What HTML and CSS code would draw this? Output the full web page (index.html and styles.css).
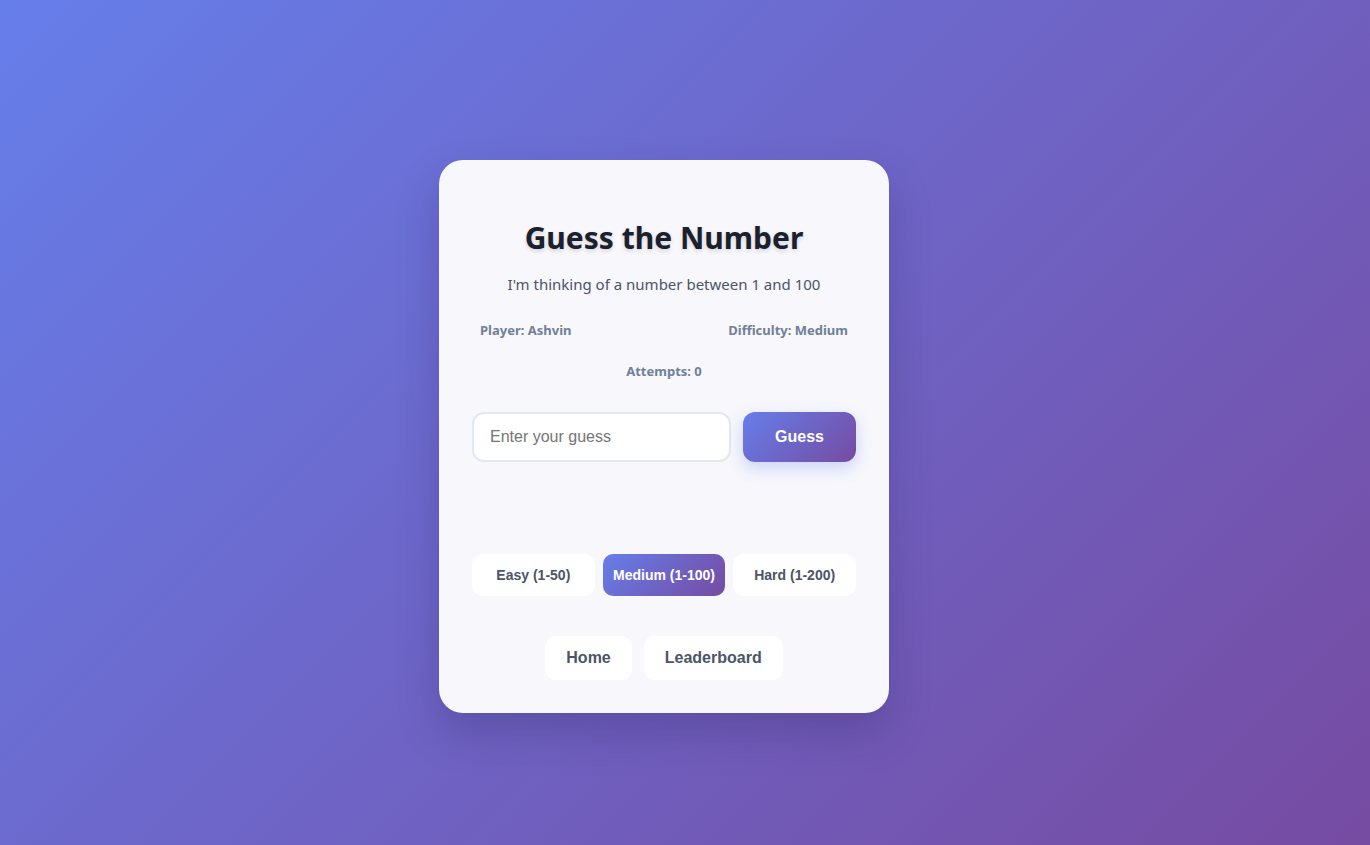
FILE: index.html
```html
<!DOCTYPE html>
<html lang="en">
<head>
<meta charset="utf-8">
<title>Guess the Number</title>
<link rel="stylesheet" href="styles.css">
</head>
<body>
<main class="page">
  <section class="card">
    <h1 class="title">Guess the Number</h1>
    <p class="subtitle">I'm thinking of a number between 1 and 100</p>
    <div class="stats">
      <span class="stat">Player: Ashvin</span>
      <span class="stat">Difficulty: Medium</span>
    </div>
    <div class="stats stats-center">
      <span class="stat">Attempts: 0</span>
    </div>
    <div class="guess-row">
      <input class="guess-input" type="text" placeholder="Enter your guess">
      <button class="guess-btn">Guess</button>
    </div>
    <div class="message"></div>
    <div class="levels">
      <button class="level">Easy (1-50)</button>
      <button class="level active">Medium (1-100)</button>
      <button class="level">Hard (1-200)</button>
    </div>
    <nav class="nav">
      <button class="nav-btn">Home</button>
      <button class="nav-btn">Leaderboard</button>
    </nav>
  </section>
</main>
</body>
</html>
```
FILE: styles.css
```css
* { box-sizing: border-box; }
html, body { margin: 0; height: 100%; }
body {
  background: linear-gradient(135deg, #667eea 0%, #764ba2 100%);
  font-family: "Noto Sans", "Open Sans", sans-serif;
}
.page {
  min-height: 100vh;
  display: flex;
  align-items: center;
  justify-content: center;
  padding: 28px 42px 0 0;
}
.card {
  width: 450px;
  background: #f7f7fc;
  border-radius: 24px;
  padding: 58px 33px 33px;
  box-shadow: 0 20px 40px rgba(40, 30, 90, 0.25);
  text-align: center;
}
.title {
  margin: 0;
  font-size: 30px;
  line-height: 40px;
  font-weight: 700;
  color: #1a202c;
  text-shadow: 0 2px 4px rgba(0, 0, 0, 0.15);
}
.subtitle {
  margin: 14px 0 0;
  font-size: 15px;
  line-height: 24px;
  color: #4a5568;
}
.stats {
  display: flex;
  justify-content: space-between;
  padding: 0 8px;
  margin-top: 24px;
}
.stats-center { justify-content: center; margin-top: 21px; }
.stat {
  font-size: 13px;
  line-height: 20px;
  font-weight: 700;
  color: #718096;
}
.guess-row {
  display: flex;
  gap: 12px;
  margin-top: 31px;
}
.guess-input {
  flex: 1;
  min-width: 0;
  height: 50px;
  border: 2px solid #e2e8f0;
  border-radius: 12px;
  background: #fff;
  padding: 0 16px;
  font-family: "Liberation Sans", Arial, sans-serif;
  font-size: 16px;
  color: #2d3748;
  outline: none;
}
.guess-input::placeholder { color: #757575; }
.guess-btn {
  width: 113px;
  height: 50px;
  border: none;
  border-radius: 12px;
  background: linear-gradient(135deg, #667eea 0%, #764ba2 100%);
  color: #fff;
  font-family: "Liberation Sans", Arial, sans-serif;
  font-size: 16px;
  font-weight: 700;
  box-shadow: 0 6px 16px rgba(102, 126, 234, 0.3);
  cursor: pointer;
}
.message { height: 92px; }
.levels {
  display: flex;
  gap: 8px;
}
.level {
  flex: 1;
  height: 42px;
  border: none;
  border-radius: 10px;
  background: #fff;
  color: #4a5568;
  font-family: "Liberation Sans", Arial, sans-serif;
  font-size: 14px;
  font-weight: 700;
  cursor: pointer;
}
.level.active {
  background: linear-gradient(135deg, #667eea 0%, #764ba2 100%);
  color: #fff;
}
.nav {
  display: flex;
  justify-content: center;
  gap: 12px;
  margin-top: 40px;
}
.nav-btn {
  height: 44px;
  padding: 0 21px;
  border: none;
  border-radius: 10px;
  background: #fff;
  color: #4a5568;
  font-family: "Liberation Sans", Arial, sans-serif;
  font-size: 16px;
  font-weight: 700;
  cursor: pointer;
}
```
